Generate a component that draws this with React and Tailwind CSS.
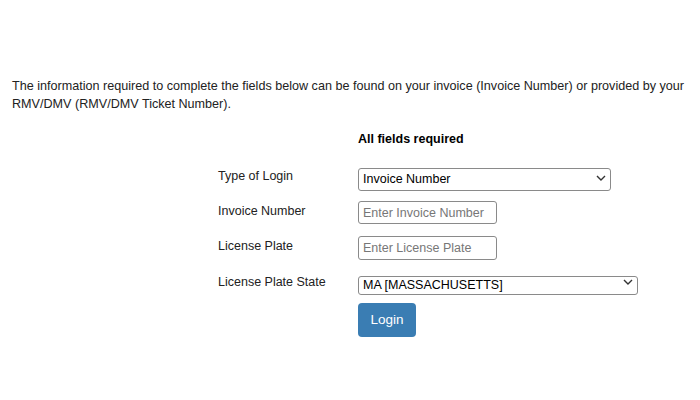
import React from 'react';

function Chevron() {
  return (
    <svg width="10" height="6" viewBox="0 0 10 6" className="pointer-events-none absolute right-[5px] top-1/2 -translate-y-1/2">
      <path d="M1 1l4 4 4-4" fill="none" stroke="#333" strokeWidth="1.4" />
    </svg>
  );
}

function Select({ value, width, height }) {
  return (
    <div className={`relative ${width} ${height}`}>
      <select
        defaultValue={value}
        className="h-full w-full appearance-none rounded-[3px] border border-[#8a8a8a] bg-white pl-[4px] text-[12.5px] leading-none text-black"
      >
        <option>{value}</option>
      </select>
      <Chevron />
    </div>
  );
}

function Field({ label, children }) {
  return (
    <div className="flex items-start">
      <label className="w-[140px] pt-[2px] text-[12.5px] leading-4 text-[#222]">{label}</label>
      {children}
    </div>
  );
}

export default function App() {
  return (
    <div className="h-[400px] w-[700px] bg-white pt-[77px] font-[family-name:'Liberation_Sans',Arial,sans-serif]">
      <p className="px-3 text-[12.6px] leading-[18px] text-[#222]">
        The information required to complete the fields below can be found on your invoice (Invoice Number) or provided by your RMV/DMV (RMV/DMV Ticket Number).
      </p>

      <div className="ml-[218px] mt-[18px]">
        <div className="pl-[140px] text-[12.5px] font-bold leading-4 text-black">All fields required</div>

        <div className="mt-[19px] flex flex-col gap-3">
          <Field label="Type of Login">
            <Select value="Invoice Number" width="w-[253px]" height="h-[23px]" />
          </Field>
          <Field label="Invoice Number">
            <input
              placeholder="Enter Invoice Number"
              className="h-[23px] w-[139px] rounded-[3px] border border-[#8a8a8a] px-[4px] text-[12.5px] placeholder:text-[#777]"
            />
          </Field>
          <Field label="License Plate">
            <input
              placeholder="Enter License Plate"
              className="h-[24px] w-[139px] rounded-[3px] border border-[#8a8a8a] px-[4px] text-[12.5px] placeholder:text-[#777]"
            />
          </Field>
          <Field label="License Plate State">
            <Select value="MA [MASSACHUSETTS]" width="w-[280px]" height="h-[19px]" />
          </Field>
          <div className="pl-[140px]">
            <button className="h-[34px] w-[58px] rounded-[4px] bg-[#3a7db3] text-[13.5px] text-white">Login</button>
          </div>
        </div>
      </div>
    </div>
  );
}
